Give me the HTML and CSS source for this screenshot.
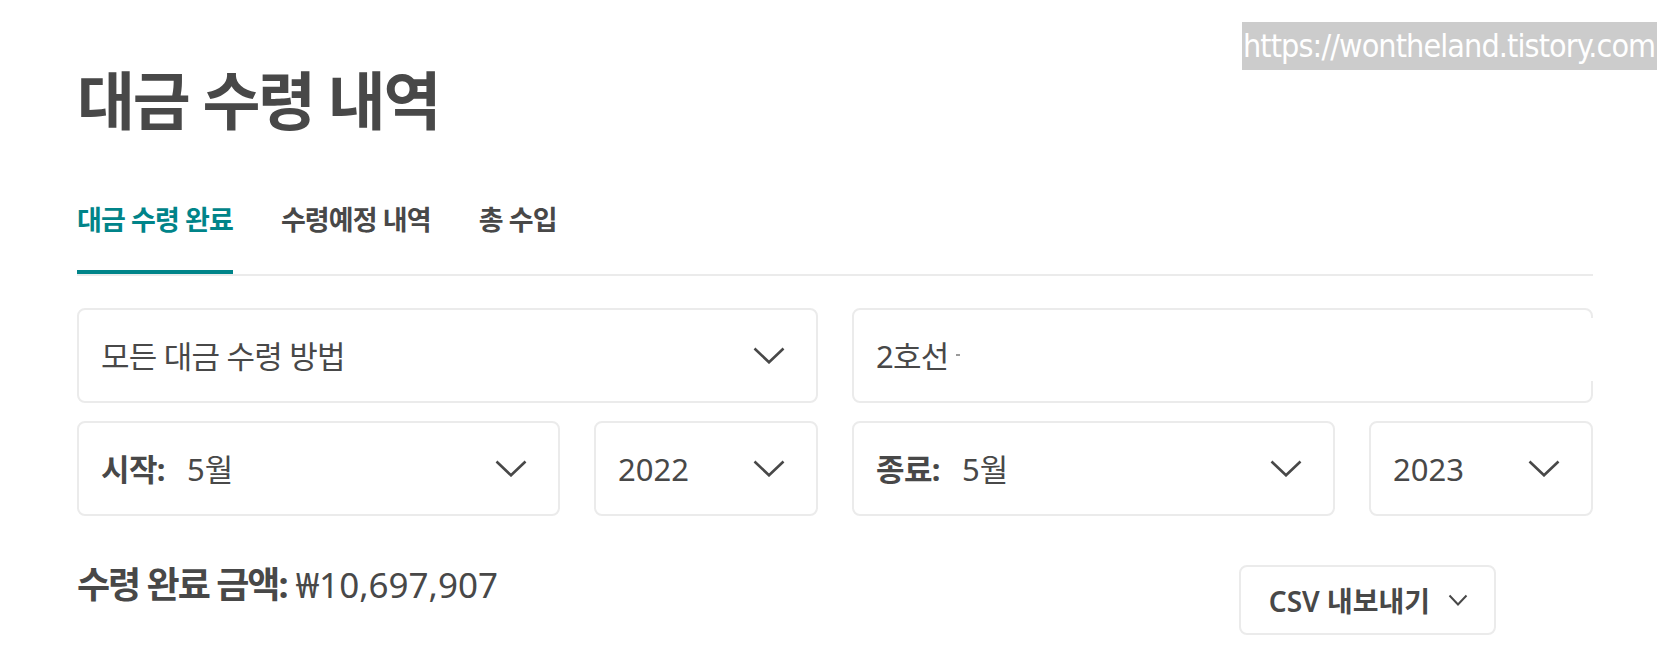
FILE: index.html
```html
<!DOCTYPE html>
<html lang="ko">
<head>
<meta charset="utf-8">
<title>대금 수령 내역</title>
<link rel="stylesheet" href="styles.css">
</head>
<body>
<div class="watermark">https://wontheland.tistory.com</div>
<main class="page">
  <h1 class="title">대금 수령 내역</h1>
  <nav class="tabs">
    <a class="tab active">대금 수령 완료</a>
    <a class="tab">수령예정 내역</a>
    <a class="tab">총 수입</a>
  </nav>
  <section class="filters">
    <div class="row">
      <div class="field">
        <span class="ko">모든 대금 수령 방법</span>
        <svg class="chev" width="32" height="17" viewBox="0 0 32 17"><path d="M1.5 1.5 L16 15.3 L30.5 1.5" fill="none" stroke="#484848" stroke-width="2.6"/></svg>
      </div>
      <div class="field search">
        <span class="ko">2호선 <span class="cut"></span></span>
      </div>
    </div>
    <div class="row">
      <div class="pair">
        <div class="field">
          <span><b class="label">시작:</b><span class="val">5월</span></span>
          <svg class="chev" width="32" height="17" viewBox="0 0 32 17"><path d="M1.5 1.5 L16 15.3 L30.5 1.5" fill="none" stroke="#484848" stroke-width="2.6"/></svg>
        </div>
        <div class="field">
          <span>2022</span>
          <svg class="chev" width="32" height="17" viewBox="0 0 32 17"><path d="M1.5 1.5 L16 15.3 L30.5 1.5" fill="none" stroke="#484848" stroke-width="2.6"/></svg>
        </div>
      </div>
      <div class="pair">
        <div class="field">
          <span><b class="label">종료:</b><span class="val">5월</span></span>
          <svg class="chev" width="32" height="17" viewBox="0 0 32 17"><path d="M1.5 1.5 L16 15.3 L30.5 1.5" fill="none" stroke="#484848" stroke-width="2.6"/></svg>
        </div>
        <div class="field">
          <span>2023</span>
          <svg class="chev" width="32" height="17" viewBox="0 0 32 17"><path d="M1.5 1.5 L16 15.3 L30.5 1.5" fill="none" stroke="#484848" stroke-width="2.6"/></svg>
        </div>
      </div>
    </div>
  </section>
  <section class="summary">
    <div class="amount"><b class="amount-label">수령 완료 금액:</b> <span class="amount-value">₩10,697,907</span></div>
    <button class="csv"><span class="csv-text">CSV 내보내기</span><svg width="20" height="13" viewBox="0 0 20 13"><path d="M1.5 1.5 L10 10.5 L18.5 1.5" fill="none" stroke="#484848" stroke-width="2"/></svg></button>
  </section>
</main>
</body>
</html>
```
FILE: styles.css
```css
* { box-sizing: border-box; }

body {
  margin: 0;
  background: #ffffff;
  color: #484848;
  font-family: "Noto Sans", "Noto Sans CJK KR", sans-serif;
}

.watermark {
  position: absolute;
  top: 22px;
  left: 1242px;
  width: 415px;
  height: 48px;
  padding-left: 1px;
  background: #cccccc;
  color: #ffffff;
  font-family: "DejaVu Sans", sans-serif;
  font-stretch: condensed;
  font-size: 32px;
  line-height: 48px;
  letter-spacing: -0.9px;
  white-space: nowrap;
  overflow: hidden;
}

.page {
  width: 1593px;
  padding: 64px 0 0 77px;
}

.title {
  margin: 0;
  font-size: 63px;
  line-height: 72px;
  font-weight: 700;
  letter-spacing: -2.3px;
}

.tabs {
  display: flex;
  gap: 48px;
  margin-top: 66px;
  width: 1516px;
  border-bottom: 2px solid #ebebeb;
}

.tab {
  font-size: 27px;
  line-height: 36px;
  font-weight: 700;
  letter-spacing: -0.9px;
  padding-bottom: 32px;
  border-bottom: 4px solid transparent;
  color: #484848;
}

.tab.active {
  color: #008489;
  border-bottom-color: #008489;
}

.filters {
  margin-top: 32px;
  width: 1516px;
  display: grid;
  row-gap: 18px;
}

.row {
  display: grid;
  grid-template-columns: 1fr 1fr;
  column-gap: 34px;
}

.pair {
  display: grid;
  grid-template-columns: 1fr 224px;
  column-gap: 34px;
}

.field {
  position: relative;
  height: 95px;
  border: 2px solid #ebebeb;
  border-radius: 8px;
  display: flex;
  align-items: center;
  justify-content: space-between;
  padding: 0 31px 0 22px;
  font-size: 31px;
  line-height: 40px;
  white-space: nowrap;
}

.ko { letter-spacing: -0.025em; }

.label {
  font-weight: 700;
  letter-spacing: -0.02em;
}

.val {
  margin-left: 22px;
}

.chev { display: block; flex: none; }

.search::after {
  content: "";
  position: absolute;
  right: -2px;
  top: 8px;
  bottom: 20px;
  width: 2px;
  background: #ffffff;
}

.cut {
  display: inline-block;
  width: 4px;
  height: 2px;
  margin-left: 0;
  background: #9a9a9a;
  vertical-align: 12px;
}

.summary {
  margin-top: 49px;
  width: 1419px;
  display: flex;
  justify-content: space-between;
  align-items: flex-start;
}

.amount {
  font-size: 35px;
  line-height: 44px;
  margin-top: -2px;
  white-space: nowrap;
}

.amount-label {
  font-weight: 700;
  font-size: 36px;
  letter-spacing: -2px;
}

.csv {
  height: 70px;
  width: 257px;
  border: 2px solid #ebebeb;
  border-radius: 8px;
  background: #ffffff;
  color: #484848;
  display: flex;
  align-items: center;
  justify-content: center;
  gap: 18px;
  padding: 0 0 0 2px;
  font-family: "Noto Sans", "Noto Sans CJK KR", sans-serif;
  font-size: 28px;
  font-weight: 600;
}

.csv-text { letter-spacing: 0; }
.csv svg { display: block; }
```
